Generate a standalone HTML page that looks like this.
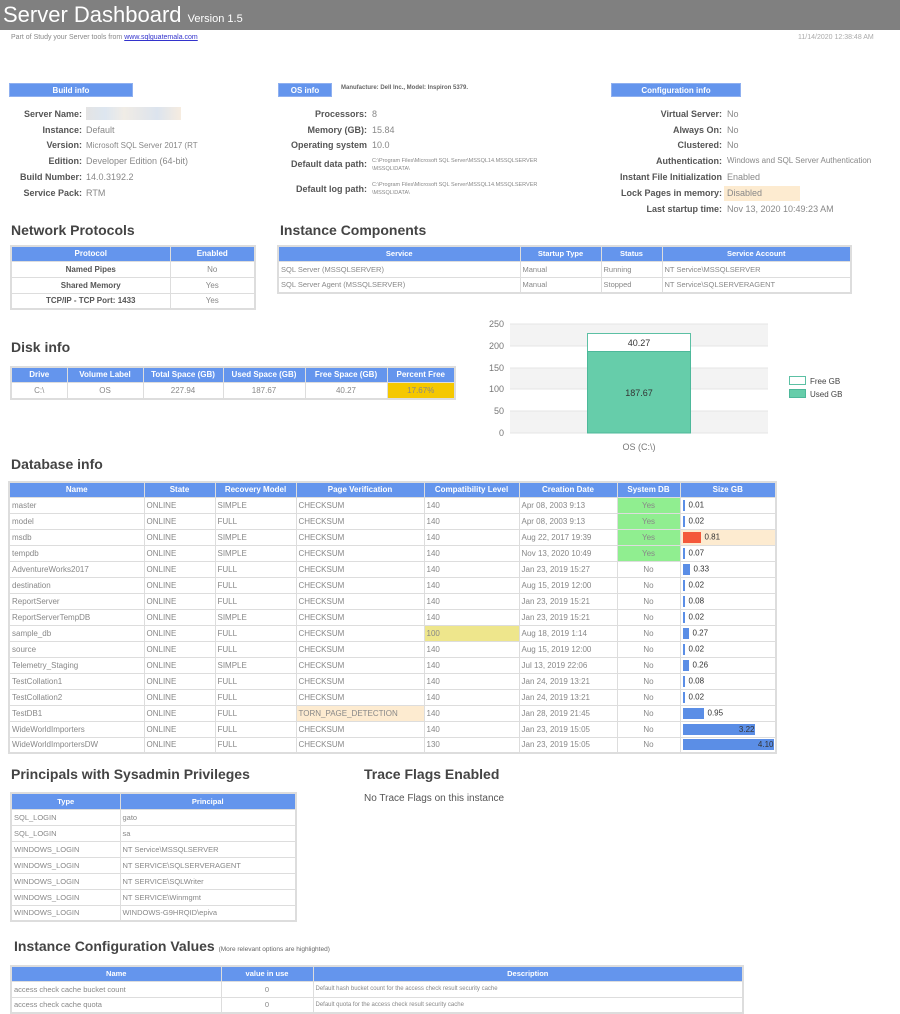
<!DOCTYPE html>
<html><head><meta charset="utf-8">
<style>
*{margin:0;padding:0;box-sizing:border-box}
body{width:900px;height:1009px;position:relative;overflow:hidden;background:#fff;font-family:"Liberation Sans",sans-serif;color:#777}
.a{position:absolute;white-space:nowrap}
.hdr{left:0;top:0;width:900px;height:30px;background:#808080}
.lbl{position:absolute;background:#6495ed;color:#fff;font-weight:bold;font-size:8px;text-align:center;line-height:14px;height:14px;border:1px solid #8fb0f0}
.k{position:absolute;text-align:right;font-weight:bold;color:#555;font-size:9px;line-height:12px}
.v{position:absolute;font-size:9px;color:#888;line-height:12px;white-space:nowrap}
h2{position:absolute;font-size:14px;font-weight:bold;color:#444;white-space:nowrap}
table{position:absolute;border-collapse:collapse;table-layout:fixed;font-size:8px;color:#888;border:2px solid #ddd}
th{background:#6495ed;color:#fff;font-weight:bold;border:1px solid #ddd;text-align:center;white-space:nowrap;overflow:hidden}
td{border:1px solid #ddd;padding:0 2px;white-space:nowrap;overflow:hidden}
.c{text-align:center}
.b{display:inline-block;height:11px;background:#5b8ee6;vertical-align:middle;margin-right:4px}
.sz{color:#333}
</style></head><body>
<div class="a hdr"></div>
<div class="a" style="left:3px;top:2px;font-size:22px;color:#fff;line-height:26px">Server Dashboard <span style="font-size:11px">Version 1.5</span></div>
<div class="a" style="left:11px;top:34px;font-size:7px;color:#888">Part of Study your Server tools from <span style="color:#33c;text-decoration:underline">www.sqlguatemala.com</span></div>
<div class="a" style="left:798px;top:34px;font-size:7px;color:#aaa">11/14/2020 12:38:48 AM</div>

<div class="lbl" style="left:9px;top:83px;width:124px">Build info</div>
<div class="lbl" style="left:278px;top:83px;width:54px">OS info</div>
<div class="a" style="left:341px;top:85px;font-size:6px;font-weight:bold;color:#666">Manufacture: Dell Inc., Model: Inspiron 5379.</div>
<div class="lbl" style="left:611px;top:83px;width:130px">Configuration info</div>

<div class="k" style="left:0;width:82px;top:108px">Server Name:</div>
<div class="a" style="left:86px;top:107px;width:95px;height:13px;background:linear-gradient(90deg,#e4e4e4,#dde6f0 20%,#f0ece6 40%,#e8e8e8 55%,#dce4ee 75%,#f6ece0)"></div>
<div class="k" style="left:0;width:82px;top:124px">Instance:</div><div class="v" style="left:86px;top:124px">Default</div>
<div class="k" style="left:0;width:82px;top:139px">Version:</div><div class="v" style="left:86px;top:140px;font-size:8px">Microsoft SQL Server 2017 (RT</div>
<div class="k" style="left:0;width:82px;top:155px">Edition:</div><div class="v" style="left:86px;top:155px">Developer Edition (64-bit)</div>
<div class="k" style="left:0;width:82px;top:171px">Build Number:</div><div class="v" style="left:86px;top:171px">14.0.3192.2</div>
<div class="k" style="left:0;width:82px;top:187px">Service Pack:</div><div class="v" style="left:86px;top:187px">RTM</div>

<div class="k" style="left:270px;width:97px;top:108px">Processors:</div><div class="v" style="left:372px;top:108px">8</div>
<div class="k" style="left:270px;width:97px;top:124px">Memory (GB):</div><div class="v" style="left:372px;top:124px">15.84</div>
<div class="k" style="left:270px;width:97px;top:139px">Operating system</div><div class="v" style="left:372px;top:139px">10.0</div>
<div class="k" style="left:270px;width:97px;top:158px">Default data path:</div><div class="v" style="left:372px;top:157px;font-size:5.5px;line-height:8px">C:\Program Files\Microsoft SQL Server\MSSQL14.MSSQLSERVER<br>\MSSQL\DATA\</div>
<div class="k" style="left:270px;width:97px;top:183px">Default log path:</div><div class="v" style="left:372px;top:181px;font-size:5.5px;line-height:8px">C:\Program Files\Microsoft SQL Server\MSSQL14.MSSQLSERVER<br>\MSSQL\DATA\</div>

<div class="k" style="left:560px;width:162px;top:108px">Virtual Server:</div><div class="v" style="left:727px;top:108px">No</div>
<div class="k" style="left:560px;width:162px;top:124px">Always On:</div><div class="v" style="left:727px;top:124px">No</div>
<div class="k" style="left:560px;width:162px;top:139px">Clustered:</div><div class="v" style="left:727px;top:139px">No</div>
<div class="k" style="left:560px;width:162px;top:155px">Authentication:</div><div class="v" style="left:727px;top:155px;font-size:8px">Windows and SQL Server Authentication</div>
<div class="k" style="left:560px;width:162px;top:171px">Instant File Initialization</div><div class="v" style="left:727px;top:171px">Enabled</div>
<div class="a" style="left:724px;top:186px;width:76px;height:15px;background:#fdebd0"></div>
<div class="k" style="left:560px;width:162px;top:187px">Lock Pages in memory:</div><div class="v" style="left:727px;top:187px">Disabled</div>
<div class="k" style="left:560px;width:162px;top:203px">Last startup time:</div><div class="v" style="left:727px;top:203px">Nov 13, 2020 10:49:23 AM</div>

<h2 style="left:11px;top:222px">Network Protocols</h2>
<table style="left:10px;top:245px;width:246px">
<col style="width:159px"><col>
<tr style="height:15px"><th>Protocol</th><th>Enabled</th></tr>
<tr style="height:16px"><td class="c" style="font-weight:bold;color:#555">Named Pipes</td><td class="c">No</td></tr>
<tr style="height:16px"><td class="c" style="font-weight:bold;color:#555">Shared Memory</td><td class="c">Yes</td></tr>
<tr style="height:16px"><td class="c" style="font-weight:bold;color:#555">TCP/IP - TCP Port: 1433</td><td class="c">Yes</td></tr>
</table>

<h2 style="left:280px;top:222px">Instance Components</h2>
<table style="left:277px;top:245px;width:575px;font-size:7.5px">
<col style="width:242px"><col style="width:81px"><col style="width:61px"><col>
<tr style="height:15px"><th>Service</th><th>Startup Type</th><th>Status</th><th>Service Account</th></tr>
<tr style="height:16px"><td>SQL Server (MSSQLSERVER)</td><td>Manual</td><td>Running</td><td>NT Service\MSSQLSERVER</td></tr>
<tr style="height:16px"><td>SQL Server Agent (MSSQLSERVER)</td><td>Manual</td><td>Stopped</td><td>NT Service\SQLSERVERAGENT</td></tr>
</table>

<h2 style="left:11px;top:339px">Disk info</h2>
<table style="left:10px;top:366px;width:446px">
<col style="width:56px"><col style="width:76px"><col style="width:80px"><col style="width:82px"><col style="width:82px"><col>
<tr style="height:15px"><th>Drive</th><th>Volume Label</th><th>Total Space (GB)</th><th>Used Space (GB)</th><th>Free Space (GB)</th><th>Percent Free</th></tr>
<tr style="height:17px"><td class="c">C:\</td><td class="c">OS</td><td class="c">227.94</td><td class="c">187.67</td><td class="c">40.27</td><td class="c" style="background:#f5c800">17.67%</td></tr>
</table>

<svg class="a" style="left:470px;top:310px" width="400" height="150" viewBox="470 310 400 150" font-family="Liberation Sans" font-size="9">
<rect x="510" y="324" width="258" height="22" fill="#f3f3f3"/>
<rect x="510" y="368" width="258" height="21" fill="#f3f3f3"/>
<rect x="510" y="411" width="258" height="22" fill="#f3f3f3"/>
<g stroke="#e4e4e4"><line x1="510" y1="324" x2="768" y2="324"/><line x1="510" y1="346" x2="768" y2="346"/><line x1="510" y1="368" x2="768" y2="368"/><line x1="510" y1="389" x2="768" y2="389"/><line x1="510" y1="411" x2="768" y2="411"/><line x1="510" y1="433" x2="768" y2="433"/></g>
<g fill="#777" text-anchor="end"><text x="504" y="327">250</text><text x="504" y="349">200</text><text x="504" y="371">150</text><text x="504" y="392">100</text><text x="504" y="414">50</text><text x="504" y="436">0</text></g>
<rect x="587.5" y="333.5" width="103" height="18" fill="#fff" stroke="#5cc0a4"/>
<rect x="587.5" y="351.5" width="103" height="81.5" fill="#66cdaa" stroke="#4db89a"/>
<text x="639" y="346" text-anchor="middle" fill="#333">40.27</text>
<text x="639" y="396" text-anchor="middle" fill="#333">187.67</text>
<text x="639" y="450" text-anchor="middle" fill="#777">OS (C:\)</text>
<rect x="789.5" y="376.5" width="16" height="8" fill="#fff" stroke="#5cc0a4"/>
<rect x="789.5" y="389.5" width="16" height="8" fill="#66cdaa" stroke="#4db89a"/>
<text x="810" y="384" font-size="8" fill="#444">Free GB</text>
<text x="810" y="397" font-size="8" fill="#444">Used GB</text>
</svg>

<h2 style="left:11px;top:456px">Database info</h2>
<table style="left:8px;top:481px;width:769px">
<col style="width:135px"><col style="width:71px"><col style="width:81px"><col style="width:128px"><col style="width:95px"><col style="width:98px"><col style="width:63px"><col>
<tr style="height:15px"><th>Name</th><th>State</th><th>Recovery Model</th><th>Page Verification</th><th>Compatibility Level</th><th>Creation Date</th><th>System DB</th><th>Size GB</th></tr>
<tr style="height:16px"><td>master</td><td>ONLINE</td><td>SIMPLE</td><td>CHECKSUM</td><td>140</td><td>Apr 08, 2003 9:13</td><td class="c" style="background:#90ee90">Yes</td><td class="sz"><span class="b" style="width:2px"></span>0.01</td></tr>
<tr style="height:16px"><td>model</td><td>ONLINE</td><td>FULL</td><td>CHECKSUM</td><td>140</td><td>Apr 08, 2003 9:13</td><td class="c" style="background:#90ee90">Yes</td><td class="sz"><span class="b" style="width:2px"></span>0.02</td></tr>
<tr style="height:16px"><td>msdb</td><td>ONLINE</td><td>SIMPLE</td><td>CHECKSUM</td><td>140</td><td>Aug 22, 2017 19:39</td><td class="c" style="background:#90ee90">Yes</td><td class="sz" style="background:#fdebd0"><span class="b" style="width:18px;background:#f4583a"></span>0.81</td></tr>
<tr style="height:16px"><td>tempdb</td><td>ONLINE</td><td>SIMPLE</td><td>CHECKSUM</td><td>140</td><td>Nov 13, 2020 10:49</td><td class="c" style="background:#90ee90">Yes</td><td class="sz"><span class="b" style="width:2px"></span>0.07</td></tr>
<tr style="height:16px"><td>AdventureWorks2017</td><td>ONLINE</td><td>FULL</td><td>CHECKSUM</td><td>140</td><td>Jan 23, 2019 15:27</td><td class="c">No</td><td class="sz"><span class="b" style="width:7px"></span>0.33</td></tr>
<tr style="height:16px"><td>destination</td><td>ONLINE</td><td>FULL</td><td>CHECKSUM</td><td>140</td><td>Aug 15, 2019 12:00</td><td class="c">No</td><td class="sz"><span class="b" style="width:2px"></span>0.02</td></tr>
<tr style="height:16px"><td>ReportServer</td><td>ONLINE</td><td>FULL</td><td>CHECKSUM</td><td>140</td><td>Jan 23, 2019 15:21</td><td class="c">No</td><td class="sz"><span class="b" style="width:2px"></span>0.08</td></tr>
<tr style="height:16px"><td>ReportServerTempDB</td><td>ONLINE</td><td>SIMPLE</td><td>CHECKSUM</td><td>140</td><td>Jan 23, 2019 15:21</td><td class="c">No</td><td class="sz"><span class="b" style="width:2px"></span>0.02</td></tr>
<tr style="height:16px"><td>sample_db</td><td>ONLINE</td><td>FULL</td><td>CHECKSUM</td><td style="background:#eee68c">100</td><td>Aug 18, 2019 1:14</td><td class="c">No</td><td class="sz"><span class="b" style="width:6px"></span>0.27</td></tr>
<tr style="height:16px"><td>source</td><td>ONLINE</td><td>FULL</td><td>CHECKSUM</td><td>140</td><td>Aug 15, 2019 12:00</td><td class="c">No</td><td class="sz"><span class="b" style="width:2px"></span>0.02</td></tr>
<tr style="height:16px"><td>Telemetry_Staging</td><td>ONLINE</td><td>SIMPLE</td><td>CHECKSUM</td><td>140</td><td>Jul 13, 2019 22:06</td><td class="c">No</td><td class="sz"><span class="b" style="width:6px"></span>0.26</td></tr>
<tr style="height:16px"><td>TestCollation1</td><td>ONLINE</td><td>FULL</td><td>CHECKSUM</td><td>140</td><td>Jan 24, 2019 13:21</td><td class="c">No</td><td class="sz"><span class="b" style="width:2px"></span>0.08</td></tr>
<tr style="height:16px"><td>TestCollation2</td><td>ONLINE</td><td>FULL</td><td>CHECKSUM</td><td>140</td><td>Jan 24, 2019 13:21</td><td class="c">No</td><td class="sz"><span class="b" style="width:2px"></span>0.02</td></tr>
<tr style="height:16px"><td>TestDB1</td><td>ONLINE</td><td>FULL</td><td style="background:#fdebd0">TORN_PAGE_DETECTION</td><td>140</td><td>Jan 28, 2019 21:45</td><td class="c">No</td><td class="sz"><span class="b" style="width:21px"></span>0.95</td></tr>
<tr style="height:16px"><td>WideWorldImporters</td><td>ONLINE</td><td>FULL</td><td>CHECKSUM</td><td>140</td><td>Jan 23, 2019 15:05</td><td class="c">No</td><td class="sz"><span class="b" style="width:72px;text-align:right;color:#333;line-height:11px">3.22</span></td></tr>
<tr style="height:16px"><td>WideWorldImportersDW</td><td>ONLINE</td><td>FULL</td><td>CHECKSUM</td><td>130</td><td>Jan 23, 2019 15:05</td><td class="c">No</td><td class="sz"><span class="b" style="width:91px;text-align:right;color:#333;line-height:11px;margin:0">4.10</span></td></tr>
</table>

<h2 style="left:11px;top:766px">Principals with Sysadmin Privileges</h2>
<table style="left:10px;top:792px;width:287px;font-size:7.5px">
<col style="width:109px"><col>
<tr style="height:16px"><th>Type</th><th>Principal</th></tr>
<tr style="height:16px"><td>SQL_LOGIN</td><td>gato</td></tr>
<tr style="height:16px"><td>SQL_LOGIN</td><td>sa</td></tr>
<tr style="height:16px"><td>WINDOWS_LOGIN</td><td>NT Service\MSSQLSERVER</td></tr>
<tr style="height:16px"><td>WINDOWS_LOGIN</td><td>NT SERVICE\SQLSERVERAGENT</td></tr>
<tr style="height:16px"><td>WINDOWS_LOGIN</td><td>NT SERVICE\SQLWriter</td></tr>
<tr style="height:16px"><td>WINDOWS_LOGIN</td><td>NT SERVICE\Winmgmt</td></tr>
<tr style="height:16px"><td>WINDOWS_LOGIN</td><td>WINDOWS-G9HRQID\epiva</td></tr>
</table>

<h2 style="left:364px;top:766px">Trace Flags Enabled</h2>
<div class="a" style="left:364px;top:793px;font-size:10px;color:#555">No Trace Flags on this instance</div>

<h2 style="left:14px;top:938px">Instance Configuration Values <span style="font-size:6.5px;font-weight:normal;color:#666">(More relevant options are highlighted)</span></h2>
<table style="left:10px;top:965px;width:734px;font-size:7.5px">
<col style="width:210px"><col style="width:92px"><col>
<tr style="height:15px"><th>Name</th><th>value in use</th><th>Description</th></tr>
<tr style="height:16px"><td>access check cache bucket count</td><td class="c">0</td><td style="font-size:6px">Default hash bucket count for the access check result security cache</td></tr>
<tr style="height:16px"><td>access check cache quota</td><td class="c">0</td><td style="font-size:6px">Default quota for the access check result security cache</td></tr>
</table>
</body></html>
